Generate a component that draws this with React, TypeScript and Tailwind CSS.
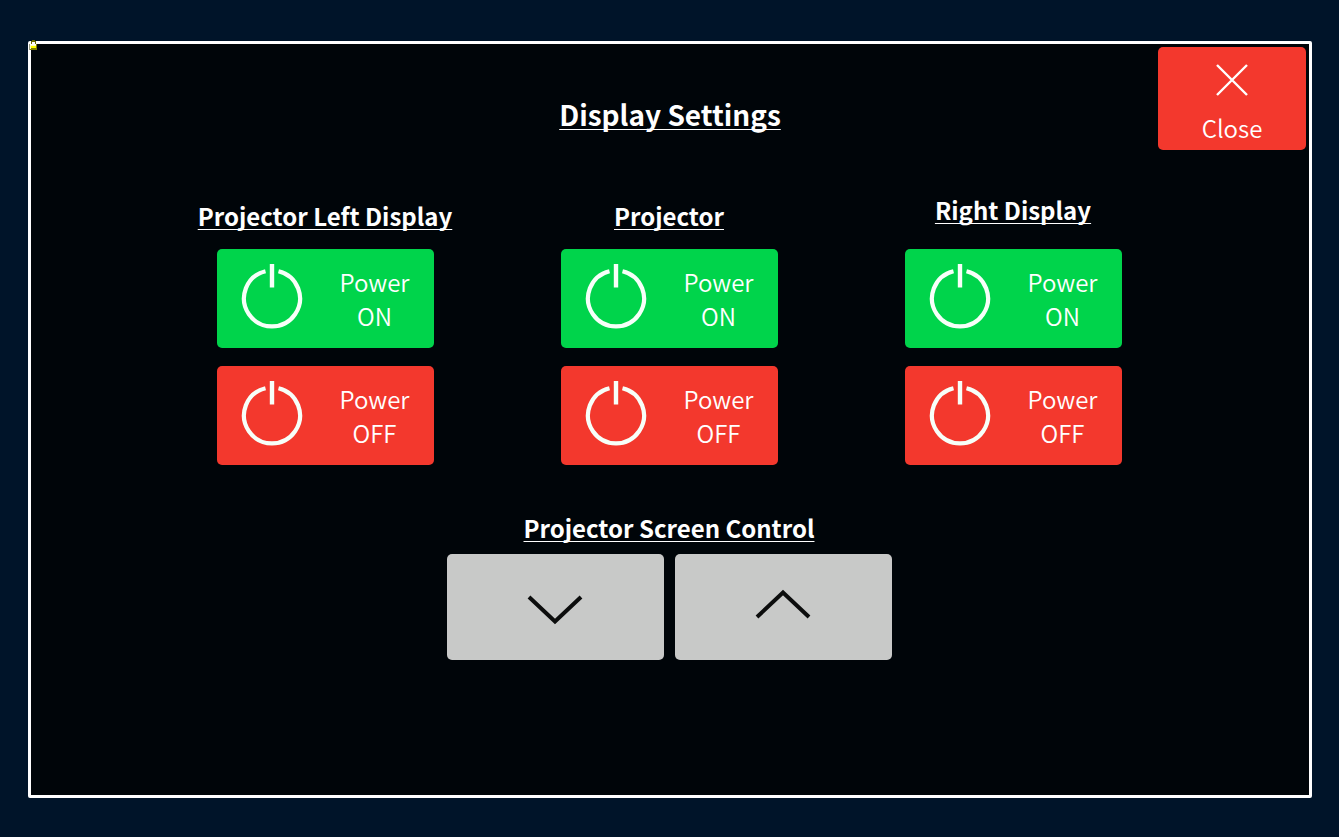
import React, { useState } from 'react';
import clsx from 'clsx';

type Display = {
  id: string;
  label: string;
  raised?: boolean;
};

const displays: Display[] = [
  { id: 'left', label: 'Projector Left Display' },
  { id: 'projector', label: 'Projector' },
  { id: 'right', label: 'Right Display', raised: true },
];

const PowerIcon: React.FC = () => (
  <svg
    className="mb-1.5"
    width="62"
    height="66"
    viewBox="0 0 62 66"
    fill="none"
    aria-hidden="true"
  >
    <path d="M24.5 8.2A28 28 0 1 0 37.5 8.2" stroke="#f7fff9" strokeWidth="4.2" />
    <path d="M31 1V24.5" stroke="#f7fff9" strokeWidth="4.4" />
  </svg>
);

const ChevronIcon: React.FC<{ up?: boolean }> = ({ up }) => (
  <svg width="58" height="32" viewBox="0 0 58 32" fill="none" aria-hidden="true">
    <path
      d={up ? 'M3 28L29 3.5L55 28' : 'M3 4L29 28.5L55 4'}
      stroke="#0c0d0d"
      strokeWidth="4"
    />
  </svg>
);

// Small padlock shown on the corner of a locked panel
const LockIcon: React.FC = () => (
  <svg width="8" height="10" viewBox="0 0 8 10" shapeRendering="crispEdges" aria-hidden="true">
    <path d="M3 0h3v1h1v3H6V2H3v2H2V1h1z" fill="#6b6b00" />
    <path d="M3 2h3v2H3z" fill="#ffffff" />
    <path d="M0 4h8v6H0z" fill="#808000" />
    <path d="M0 4h1v6H0z" fill="#9a9a80" />
    <path d="M1 4h6v1H1z" fill="#ffffff" />
    <path d="M1 5h1v4H1zM2 5h5v1H2z" fill="#ffffc0" />
    <path d="M2 6h5v2H2z" fill="#ffff00" />
  </svg>
);

type PowerButtonProps = {
  state: 'ON' | 'OFF';
  active: boolean;
  onClick: () => void;
};

const PowerButton: React.FC<PowerButtonProps> = ({ state, active, onClick }) => (
  <button
    type="button"
    aria-pressed={active}
    onClick={onClick}
    className={clsx(
      'flex h-[99px] w-[217px] items-center justify-between rounded-[5px] pl-6',
      state === 'ON' ? 'bg-[#00d44b]' : 'bg-[#f3382d]'
    )}
  >
    <PowerIcon />
    <span className="w-[118px] text-center text-[24px] leading-[34px] font-[350]">
      Power
      <br />
      {state}
    </span>
  </button>
);

const headingClass =
  'font-bold underline decoration-1 underline-offset-[3px] [text-decoration-skip-ink:none]';

const App: React.FC = () => {
  const [power, setPower] = useState<Record<string, boolean>>({});

  const setDisplay = (id: string, on: boolean) => {
    setPower({ ...power, [id]: on });
  };

  return (
    <div className="flex min-h-screen bg-[#001429] pt-[41px] pr-[27px] pb-[39px] pl-[28px] font-['Noto_Sans_CJK_SC','Noto_Sans',sans-serif] text-white">
      <main className="relative flex-1 rounded-[2px] border-[3px] border-white bg-[#000509] p-[3px]">
        <span className="absolute -top-1 -left-0.5">
          <LockIcon />
        </span>

        {/* Title bar */}
        <header className="grid grid-cols-[1fr_auto_1fr] items-start">
          <h1 className={clsx(headingClass, 'col-start-2 pt-[45px] text-[28px] leading-[44px]')}>
            Display Settings
          </h1>
          <button
            type="button"
            className="flex h-[103px] w-[148px] flex-col items-center justify-between justify-self-end rounded-[5px] bg-[#f3382d] pt-[17px] pb-[5px]"
          >
            <svg width="34" height="32" viewBox="0 0 34 32" fill="none" aria-hidden="true">
              <path d="M2 1L32 31M32 1L2 31" stroke="#ffffff" strokeWidth="2.4" />
            </svg>
            <span className="text-[24px] leading-[34px] font-[350]">Close</span>
          </button>
        </header>

        <div className="pr-0.5">
          {/* Power controls */}
          <div className="mx-auto mt-[41px] grid max-w-[1032px] grid-cols-3 items-end">
            {displays.map((display) => (
              <section key={display.id} className="flex flex-col items-center">
                <h2
                  className={clsx(
                    headingClass,
                    'text-[24px] leading-[38px]',
                    display.raised ? 'mb-5' : 'mb-3.5'
                  )}
                >
                  {display.label}
                </h2>
                <div className="flex flex-col gap-[18px]">
                  <PowerButton
                    state="ON"
                    active={power[display.id] === true}
                    onClick={() => setDisplay(display.id, true)}
                  />
                  <PowerButton
                    state="OFF"
                    active={power[display.id] === false}
                    onClick={() => setDisplay(display.id, false)}
                  />
                </div>
              </section>
            ))}
          </div>

          {/* Screen control */}
          <section className="mt-11 flex flex-col items-center">
            <h2 className={clsx(headingClass, 'text-[24px] leading-[38px]')}>
              Projector Screen Control
            </h2>
            <div className="mt-[7px] flex gap-[11px]">
              <button
                type="button"
                aria-label="Lower screen"
                className="flex h-[106px] w-[217px] items-center justify-center rounded-[5px] bg-[#c8c9c8] pt-1"
              >
                <ChevronIcon />
              </button>
              <button
                type="button"
                aria-label="Raise screen"
                className="flex h-[106px] w-[217px] items-center justify-center rounded-[5px] bg-[#c8c9c8] pb-1"
              >
                <ChevronIcon up />
              </button>
            </div>
          </section>
        </div>
      </main>
    </div>
  );
};

export default App;
